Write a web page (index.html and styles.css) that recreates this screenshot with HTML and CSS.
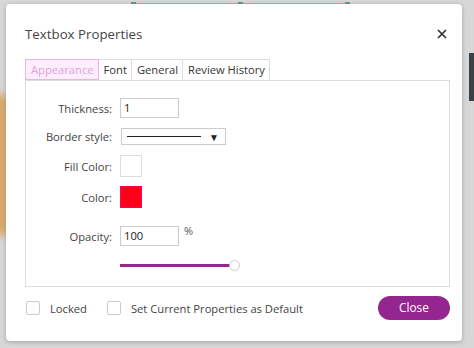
FILE: index.html
```html
<!DOCTYPE html>
<html>
<head>
<meta charset="utf-8">
<link rel="stylesheet" href="styles.css">
</head>
<body>
<div class="backdrop">
  <div class="sel-line"></div>
  <div class="handle h1"></div>
  <div class="handle h2"></div>
  <div class="handle h3"></div>
  <div class="orange"></div>
  <div class="darkbar"></div>
</div>
<div class="dialog">
  <div class="header">
    <div class="title">Textbox Properties</div>
    <div class="close-x">
      <svg width="10" height="10" viewBox="0 0 10 10"><path d="M1 1 L9 9 M9 1 L1 9" stroke="#333" stroke-width="1.7" fill="none"/></svg>
    </div>
  </div>
  <div class="tabs">
    <div class="tab active">Appearance</div>
    <div class="tab">Font</div>
    <div class="tab">General</div>
    <div class="tab">Review History</div>
  </div>
  <div class="panel">
    <div class="row r1">
      <div class="label">Thickness:</div>
      <div class="input">1</div>
    </div>
    <div class="row r2">
      <div class="label">Border style:</div>
      <div class="select"><span class="line"></span><span class="arrow">▼</span></div>
    </div>
    <div class="row r3">
      <div class="label">Fill Color:</div>
      <div class="swatch fill"></div>
    </div>
    <div class="row r4">
      <div class="label">Color:</div>
      <div class="swatch red"></div>
    </div>
    <div class="row r5">
      <div class="label">Opacity:</div>
      <div class="input">100</div>
      <div class="pct">%</div>
    </div>
    <div class="row r6">
      <div class="label"></div>
      <div class="slider"><span class="track"></span><span class="thumb"></span></div>
    </div>
  </div>
  <div class="footer">
    <div class="check"><span class="box"></span><span class="clabel">Locked</span></div>
    <div class="check"><span class="box"></span><span class="clabel">Set Current Properties as Default</span></div>
    <div class="spacer"></div>
    <div class="btn">Close</div>
  </div>
</div>
</body>
</html>
```
FILE: styles.css
```css
html, body {
  margin: 0;
  padding: 0;
}
body {
  width: 474px;
  height: 348px;
  background: #d7d7d7;
  font-family: "Open Sans", "Noto Sans", sans-serif;
  position: relative;
  overflow: hidden;
}
.backdrop {
  position: absolute;
  left: 0; top: 0; width: 474px; height: 348px;
}
.sel-line {
  position: absolute;
  left: 133px; top: 3px; width: 216px; height: 1px;
  background: #d9a0a8;
}
.handle {
  position: absolute;
  top: 2px; width: 5px; height: 3px;
  background: #5f9c8a;
}
.h1 { left: 131px; }
.h2 { left: 238px; }
.h3 { left: 345px; }
.orange {
  position: absolute;
  left: -8px; top: 95px; width: 16px; height: 140px;
  background: #d99a45;
  filter: blur(4px);
  opacity: 0.8;
}
.darkbar {
  position: absolute;
  left: 469px; top: 53px; width: 5px; height: 48px;
  background: #3a4148;
}
.dialog {
  position: absolute;
  left: 6px; top: 4px;
  width: 456px; height: 337px;
  background: #fff;
  border-radius: 4px;
  box-shadow: 0 1px 4px rgba(0,0,0,0.25);
  box-sizing: border-box;
  padding: 0 12px 0 19px;
  display: flex;
  flex-direction: column;
}
.header {
  display: flex;
  align-items: center;
  height: 20px;
  margin-top: 20px;
}
.title {
  font-size: 13.3px;
  color: #444;
  flex: 1;
}
.close-x {
  width: 10px; height: 10px;
  margin-right: 3px;
  display: flex;
}
.tabs {
  display: flex;
  margin-top: 15px;
  height: 21px;
}
.tab {
  box-sizing: border-box;
  height: 21px;
  border: 1px solid #ddd;
  border-left: none;
  border-bottom: none;
  font-size: 11.2px;
  color: #333;
  padding: 0 4px 0 5px;
  line-height: 19px;
}
.tab.active {
  border: 1px solid #ecb3e8;
  background: #fdeefc;
  color: #e4a0e0;
  padding: 0 4px 0 5px;
}
.panel {
  box-sizing: border-box;
  width: 425px;
  height: 207px;
  border: 1px solid #ddd;
  padding-top: 17px;
  display: flex;
  flex-direction: column;
}
.row {
  display: flex;
  align-items: center;
}
.label {
  width: 86px;
  text-align: right;
  font-size: 11.2px;
  color: #444;
  margin-right: 8px;
}
.r1 { height: 20px; }
.r2 { height: 17px; margin-top: 10px; }
.r3 { height: 22px; margin-top: 10px; }
.r4 { height: 22px; margin-top: 9px; }
.r5 { height: 20px; margin-top: 18px; }
.r6 { height: 11px; margin-top: 14px; }
.input {
  box-sizing: border-box;
  width: 59px; height: 20px;
  border: 1px solid #ccc;
  font-size: 11.2px;
  color: #222;
  padding-left: 3px;
  line-height: 18px;
}
.pct {
  font-size: 11px;
  color: #555;
  margin-left: 5px;
  align-self: flex-start;
  margin-top: -3px;
}
.select {
  box-sizing: border-box;
  width: 105px; height: 17px;
  border: 1px solid #ccc;
  margin-left: 1px;
  display: flex;
  align-items: center;
  padding-left: 5px;
}
.select .line {
  width: 74px; height: 1px;
  background: #222;
}
.select .arrow {
  font-size: 10px;
  color: #222;
  margin-left: 8px;
  line-height: 10px;
}
.swatch {
  box-sizing: border-box;
  width: 22px; height: 22px;
  border: 1px solid #ddd;
}
.swatch.red {
  background: #ff0019;
  border-color: #f06;
}
.slider {
  position: relative;
  width: 120px; height: 11px;
  display: flex;
  align-items: center;
}
.track {
  width: 113px; height: 3px;
  background: #93278f;
}
.thumb {
  box-sizing: border-box;
  width: 11px; height: 11px;
  border-radius: 50%;
  border: 1px solid #ccc;
  background: #fff;
  margin-left: -4px;
}
.footer {
  display: flex;
  align-items: center;
  margin-top: 9px;
  height: 24px;
}
.check {
  display: flex;
  align-items: center;
  margin-right: 19px;
}
.box {
  box-sizing: border-box;
  width: 14px; height: 14px;
  border: 1px solid #ccc;
  border-radius: 2px;
  margin-left: 1px;
}
.clabel {
  font-size: 11.2px;
  color: #444;
  margin-left: 10px;
}
.spacer { flex: 1; }
.btn {
  width: 72px; height: 24px;
  border-radius: 12px;
  background: #93278f;
  color: #fff;
  font-size: 11.8px;
  text-align: center;
  line-height: 23px;
}
```
